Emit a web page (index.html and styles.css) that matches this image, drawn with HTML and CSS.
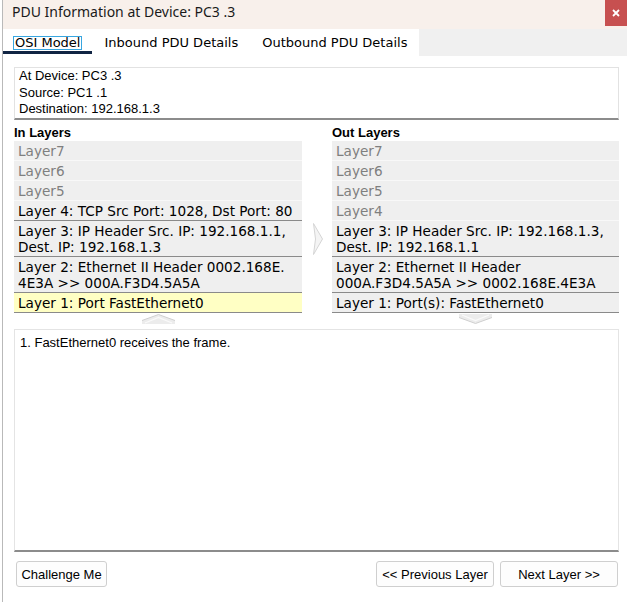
FILE: index.html
```html
<!DOCTYPE html>
<html>
<head>
<meta charset="utf-8">
<link rel="stylesheet" href="styles.css">
</head>
<body>
<div class="window">
  <div class="titlebar">
    <span class="title">PDU Information at Device: PC3 .3</span>
    <div class="close"><svg width="8" height="8" viewBox="0 0 8 8"><path d="M1 1L7 7M7 1L1 7" stroke="#fff" stroke-width="1.8"/></svg></div>
  </div>
  <div class="tabs">
    <div class="tablist">
      <div class="tab active"><span class="focus">OSI Model</span></div>
      <div class="tab">Inbound PDU Details</div>
      <div class="tab">Outbound PDU Details</div>
    </div>
  </div>
  <div class="content">
    <div class="info">
      <div>At Device: PC3 .3</div>
      <div>Source: PC1 .1</div>
      <div>Destination: 192.168.1.3</div>
    </div>
    <div class="layers">
      <div class="col">
        <div class="col-head">In Layers</div>
        <div class="row dim">Layer7</div>
        <div class="row dim">Layer6</div>
        <div class="row dim">Layer5</div>
        <div class="row sep">Layer 4: TCP Src Port: 1028, Dst Port: 80</div>
        <div class="row sep">Layer 3: IP Header Src. IP: 192.168.1.1,<br>Dest. IP: 192.168.1.3</div>
        <div class="row sep">Layer 2: Ethernet II Header 0002.168E.<br>4E3A &gt;&gt; 000A.F3D4.5A5A</div>
        <div class="row sep cur">Layer 1: Port FastEthernet0</div>
        <div class="nav"><svg width="33" height="10" viewBox="0 0 33 10"><polygon points="0,10 0,6.5 16.5,0.5 33,6.5 33,10" fill="#ececec"/><polyline points="0,6.5 16.5,0.5 33,6.5" fill="none" stroke="#cfcfcf" stroke-width="1"/><polyline points="3,9 16.5,3.5 30,9" fill="none" stroke="#fafafa" stroke-width="1.2"/></svg></div>
      </div>
      <div class="mid">
        <svg width="10" height="32" viewBox="0 0 10 32"><polygon points="0.5,0.5 9.5,16 0.5,31.5 2.5,16" fill="#f4f4f4" stroke="#d4d4d4" stroke-width="1"/></svg>
      </div>
      <div class="col">
        <div class="col-head">Out Layers</div>
        <div class="row dim">Layer7</div>
        <div class="row dim">Layer6</div>
        <div class="row dim">Layer5</div>
        <div class="row dim">Layer4</div>
        <div class="row sep">Layer 3: IP Header Src. IP: 192.168.1.3,<br>Dest. IP: 192.168.1.1</div>
        <div class="row sep">Layer 2: Ethernet II Header<br>000A.F3D4.5A5A &gt;&gt; 0002.168E.4E3A</div>
        <div class="row sep">Layer 1: Port(s): FastEthernet0</div>
        <div class="nav"><svg width="33" height="10" viewBox="0 0 33 10"><polygon points="0,0 33,0 33,3.5 16.5,9.5 0,3.5" fill="#ececec"/><polyline points="0,3.5 16.5,9.5 33,3.5" fill="none" stroke="#cfcfcf" stroke-width="1"/><polyline points="3,1 16.5,6.5 30,1" fill="none" stroke="#fafafa" stroke-width="1.2"/></svg></div>
      </div>
    </div>
    <div class="desc">1. FastEthernet0 receives the frame.</div>
    <div class="buttons">
      <button class="btn challenge">Challenge Me</button>
      <div class="spacer"></div>
      <button class="btn wide">&lt;&lt; Previous Layer</button>
      <button class="btn wide">Next Layer &gt;&gt;</button>
    </div>
  </div>
</div>
</body>
</html>
```
FILE: styles.css
```css
html, body {
  margin: 0;
  padding: 0;
  background: #fff;
}
body {
  width: 627px;
  height: 602px;
  overflow: hidden;
}
.window {
  margin-left: 2px;
  border-left: 1px solid #b9b9b9;
  height: 602px;
  display: flex;
  flex-direction: column;
  font-family: "Liberation Sans", Arial, sans-serif;
  color: #000;
}
.titlebar {
  height: 29px;
  background: #f8f0eb;
  display: flex;
  justify-content: space-between;
  align-items: flex-start;
}
.title {
  font-family: "Noto Sans", sans-serif;
  font-size: 14px;
  line-height: 24px;
  padding-left: 9px;
  color: #1a1a1a;
}
.close {
  width: 22px;
  height: 26px;
  background: #c75050;
  display: flex;
  align-items: center;
  justify-content: center;
}
.tabs {
  height: 27px;
  background: #f0f0f0;
  display: flex;
}
.tablist {
  width: 416px;
  background: #fff;
  display: flex;
  align-items: flex-start;
}
.tab {
  font-family: "DejaVu Sans", sans-serif;
  font-size: 13px;
  line-height: 17px;
  padding: 5px 12px 0;
  border-bottom: 3px solid transparent;
  white-space: nowrap;
}
.tab.active {
  border-bottom-color: #102443;
}
.focus {
  display: inline-block;
  line-height: 12px;
  border: 1px solid #38a6e0;
  padding: 0 1px;
  margin: 0 -2px;
}
.content {
  flex: 1;
  padding: 11px 8px 15px 11px;
  display: flex;
  flex-direction: column;
}
.info {
  border: 1px solid #e2e2e2;
  border-bottom: 2px solid #8c8c8c;
  padding: 0 4px 0;
  font-size: 13px;
  line-height: 16.5px;
}
.layers {
  display: grid;
  grid-template-columns: 288px 30px 1fr;
  margin-top: 5px;
}
.col-head {
  font-weight: bold;
  font-size: 13px;
  line-height: 16px;
}
.row {
  background: #efefef;
  font-family: "DejaVu Sans", sans-serif;
  font-size: 13.6px;
  line-height: 16px;
  padding: 2px 4px 1px;
  border-bottom: 1px solid #f8f8f8;
  white-space: nowrap;
}
.row.dim {
  color: #7f7f7f;
}
.row.sep {
  border-bottom-color: #8a8a8a;
}
.row.cur {
  background: #ffffc4;
}
.nav {
  height: 16px;
  display: flex;
  justify-content: center;
  align-items: flex-start;
  padding-top: 1px;
  box-sizing: border-box;
}
.mid {
  display: flex;
  justify-content: center;
  padding-top: 98px;
  padding-left: 2px;
}
.desc {
  flex: 1;
  border: 1px solid #e4e4e4;
  border-bottom: 2px solid #8c8c8c;
  padding: 5px 5px 0;
  font-size: 13px;
  line-height: 16px;
}
.buttons {
  display: flex;
  margin-top: 9px;
  gap: 6px;
  padding: 0 1px 0 2px;
}
.spacer {
  flex: 1;
}
.btn {
  height: 26px;
  border: 1px solid #cfcfcf;
  border-radius: 3px;
  background: #fdfdfd;
  font-family: "Liberation Sans", Arial, sans-serif;
  font-size: 13px;
  color: #000;
  padding: 0;
}
.challenge {
  width: 91px;
}
.wide {
  width: 118px;
}
```
